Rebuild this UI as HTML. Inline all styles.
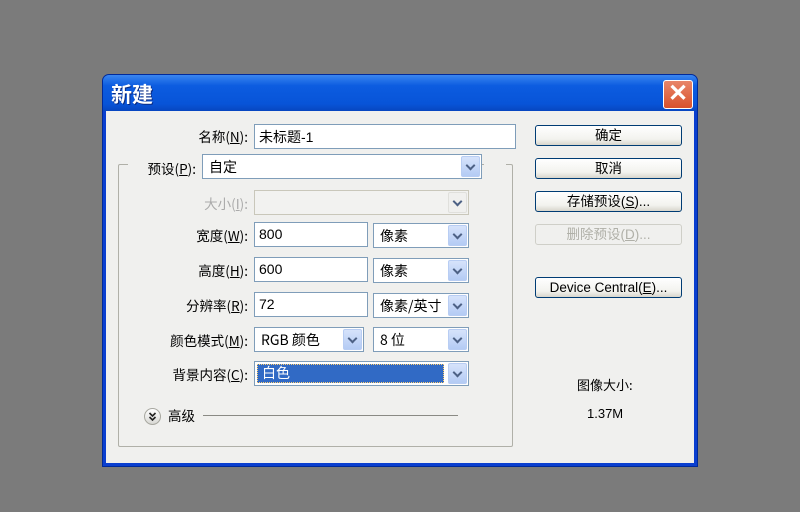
<!DOCTYPE html>
<html><head><meta charset="utf-8"><style>
*{margin:0;padding:0;box-sizing:border-box}
body{width:800px;height:512px;background:#7b7b7b;position:relative;overflow:hidden;font-family:"Liberation Sans","Noto Sans CJK SC",sans-serif;font-size:13px;color:#000}
.a{position:absolute}
#dlg{left:102px;top:74px;width:596px;height:393px;background:#0a3fd0;border-radius:7px 7px 0 0;border:1px solid #002a9a}
#title{left:0;top:0;width:594px;height:36px;background:linear-gradient(#3a86f0,#0c5ce0 30%,#0854d8 80%,#0746c0);border-radius:6px 6px 0 0}
#title span{position:absolute;left:8px;top:4px;color:#fff;font-size:21px;font-weight:bold;font-family:"Noto Sans CJK SC",sans-serif;text-shadow:1px 1px 0 #0a2a80}
#close{left:560px;top:5px;width:30px;height:29px;background:linear-gradient(#e8866a,#d9512c);border:1px solid #fff;border-radius:3px;color:#fff;font-size:24px;font-weight:bold;text-align:center;line-height:26px}
#body{left:3px;top:36px;width:588px;height:352px;background:#f0f0ee}
.lbl{position:absolute;text-align:right;width:160px;font-family:"Noto Sans CJK SC",sans-serif;font-size:13.5px;line-height:16px}
.in{position:absolute;background:#fff;border:1px solid #7f9db9;height:25px;padding:3px 4px;font-size:14px}
.sel{position:absolute;background:#fff;border:1px solid #7f9db9;height:25px;padding:3px 6px;font-size:14px;font-family:"Noto Sans CJK SC",sans-serif;line-height:18px}
.sel i{position:absolute;right:1px;top:1px;width:19px;height:21px;background:linear-gradient(#d6e3fb,#b4cbf4);border-radius:2px;border:1px solid #b8cdf3}
.sel i:after{content:"";position:absolute;left:5px;top:5px;width:5px;height:5px;border-right:2px solid #4d6185;border-bottom:2px solid #4d6185;transform:rotate(45deg)}
.btn{position:absolute;left:535px;width:147px;height:21px;border:1px solid #003c74;border-radius:3px;background:linear-gradient(#fff,#f2f2ee 70%,#d8d6cc);text-align:center;font-size:13.5px;line-height:19px;font-family:"Liberation Sans","Noto Sans CJK SC",sans-serif}
u{text-decoration:underline}
</style></head><body>
<div id="dlg" class="a">
<div id="title" class="a"><span>新建</span></div>
<div id="close" class="a">✕</div>
<div id="body" class="a"></div>
</div>
<div class="a" style="left:118px;top:164px;width:395px;height:283px;border:1px solid #b0b0a8;border-radius:2px"></div>
<div class="a" style="left:128px;top:158px;width:76px;height:14px;background:#f0f0ee"></div>
<div class="a" style="left:484px;top:158px;width:22px;height:14px;background:#f0f0ee"></div>

<div class="lbl" style="left:88px;top:128px">名称(<u>N</u>):</div>
<div class="in" style="left:254px;top:124px;width:262px;font-family:'Liberation Sans','Noto Sans CJK SC',sans-serif;line-height:18px">未标题-1</div>
<div class="lbl" style="left:36px;top:160px">预设(<u>P</u>):</div>
<div class="sel" style="left:202px;top:154px;width:280px">自定<i></i></div>
<div class="lbl" style="left:88px;top:195px;color:#aaa">大小(<u>I</u>):</div>
<div class="sel" style="left:254px;top:190px;width:215px;background:#f2f2f0;border-color:#c9c7ba"><i style="background:#f0f0ee;border-color:#e0e0dc"></i></div>
<div class="lbl" style="left:88px;top:227px">宽度(<u>W</u>):</div>
<div class="in" style="left:254px;top:222px;width:114px">800</div>
<div class="sel" style="left:373px;top:223px;width:96px">像素<i></i></div>
<div class="lbl" style="left:88px;top:262px">高度(<u>H</u>):</div>
<div class="in" style="left:254px;top:257px;width:114px">600</div>
<div class="sel" style="left:373px;top:258px;width:96px">像素<i></i></div>
<div class="lbl" style="left:88px;top:297px">分辨率(<u>R</u>):</div>
<div class="in" style="left:254px;top:292px;width:114px">72</div>
<div class="sel" style="left:373px;top:293px;width:96px;padding-left:6px">像素/英寸<i></i></div>
<div class="lbl" style="left:88px;top:332px">颜色模式(<u>M</u>):</div>
<div class="sel" style="left:254px;top:327px;width:110px">RGB 颜色<i></i></div>
<div class="sel" style="left:373px;top:327px;width:96px">8 位<i></i></div>
<div class="lbl" style="left:88px;top:366px">背景内容(<u>C</u>):</div>
<div class="sel" style="left:254px;top:361px;width:215px;padding:2px"><div style="width:187px;height:19px;background:#316ac5;color:#fff;padding-left:4px;border:1px dotted #ffd070;line-height:17px">白色</div><i></i></div>
<div class="a" style="left:144px;top:408px;width:17px;height:17px;border-radius:50%;background:linear-gradient(#fff,#d8d8d4);border:1px solid #a8a8a0"></div>
<svg class="a" style="left:144px;top:408px" width="17" height="17"><path d="M5.5 5l3 3 3-3M5.5 9l3 3 3-3" fill="none" stroke="#222" stroke-width="1.6"/></svg>
<div class="a" style="left:168px;top:407px;font-family:'Noto Sans CJK SC',sans-serif;font-size:13.5px;line-height:16px">高级</div>
<div class="a" style="left:203px;top:415px;width:255px;height:1px;background:#8a8a84"></div>

<div class="btn" style="top:125px">确定</div>
<div class="btn" style="top:158px">取消</div>
<div class="btn" style="top:191px">存储预设(<u>S</u>)...</div>
<div class="btn" style="top:224px;color:#b0b0a8;border-color:#cfcfc8;background:#f0f0ee">删除预设(<u>D</u>)...</div>
<div class="btn" style="top:277px">Device Central(<u>E</u>)...</div>
<div class="a" style="left:577px;top:377px;font-family:'Noto Sans CJK SC',sans-serif;line-height:16px">图像大小:</div>
<div class="a" style="left:587px;top:406px">1.37M</div>
</body></html>
